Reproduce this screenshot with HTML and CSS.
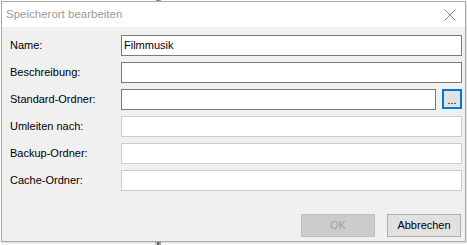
FILE: index.html
```html
<!DOCTYPE html>
<html lang="de">
<head>
<meta charset="utf-8">
<title>Speicherort bearbeiten</title>
<link rel="stylesheet" href="styles.css">
</head>
<body>
<div class="window">
  <div class="titlebar">
    <span class="title">Speicherort bearbeiten</span>
    <svg class="close" width="12" height="12" viewBox="0 0 12 12"><path d="M0.5 0.5 L11.5 11.5 M11.5 0.5 L0.5 11.5" stroke="#8c8c8c" stroke-width="1" fill="none"/></svg>
  </div>
  <div class="content">
    <div class="form">
      <label class="label">Name:</label>
      <div class="field"><div class="input active">Filmmusik</div></div>
      <label class="label">Beschreibung:</label>
      <div class="field"><div class="input active"></div></div>
      <label class="label">Standard-Ordner:</label>
      <div class="field"><div class="input active"></div><div class="browse">...</div></div>
      <label class="label">Umleiten nach:</label>
      <div class="field"><div class="input"></div></div>
      <label class="label">Backup-Ordner:</label>
      <div class="field"><div class="input"></div></div>
      <label class="label">Cache-Ordner:</label>
      <div class="field"><div class="input"></div></div>
    </div>
    <div class="buttons">
      <div class="btn disabled">OK</div>
      <div class="btn">Abbrechen</div>
    </div>
  </div>
</div>
</body>
</html>
```
FILE: styles.css
```css
html, body {
  margin: 0;
  padding: 0;
}
body {
  width: 467px;
  height: 245px;
  background:
    linear-gradient(to right, transparent 155px, #cfcfcf 155px, #cfcfcf 157px, #6e6e6e 157px, #6e6e6e 159px, #a8a8a8 159px, #a8a8a8 161px, transparent 161px),
    #ffffff;
  font-family: "Liberation Sans", Arial, sans-serif;
  font-size: 11px;
  color: #000;
  padding-top: 1px;
  padding-left: 1px;
  box-sizing: border-box;
  overflow: hidden;
}
.window {
  width: 465px;
  height: 241px;
  box-sizing: border-box;
  border: 1px solid #a9a9a9;
  background: #f0f0f0;
  display: flex;
  flex-direction: column;
  box-shadow: 1px 1px 2px rgba(0,0,0,0.18);
}
.titlebar {
  height: 25px;
  background: #ffffff;
  display: flex;
  align-items: center;
  justify-content: space-between;
  padding: 0 8px 0 4px;
  flex: none;
}
.title {
  color: #9a9a9a;
  font-size: 11.5px;
  padding-bottom: 1px;
}
.close {
  display: block;
  margin-right: 1px;
}
.content {
  flex: 1;
  display: flex;
  flex-direction: column;
  padding: 8px 3px 4px 8px;
}
.form {
  display: grid;
  grid-template-columns: 111px 1fr;
  row-gap: 6px;
  align-items: center;
}
.label {
  line-height: 21px;
  height: 21px;
}
.field {
  display: flex;
  gap: 6px;
  align-items: flex-start;
}
.input {
  flex: 1;
  height: 21px;
  box-sizing: border-box;
  border: 1px solid #cccccc;
  background: #ffffff;
  padding: 0 2px;
  line-height: 19px;
  font-size: 11px;
  color: #000;
}
.input.active {
  border-color: #7a7a7a;
}
.browse {
  width: 20px;
  height: 20px;
  box-sizing: border-box;
  border: 2px solid #0078d7;
  background: #e1e1e1;
  text-align: center;
  line-height: 18px;
  font-size: 11px;
  flex: none;
}
.buttons {
  margin-top: auto;
  display: flex;
  justify-content: flex-end;
  gap: 12px;
  padding-right: 1px;
}
.btn {
  width: 74px;
  height: 23px;
  box-sizing: border-box;
  border: 1px solid #adadad;
  background: #e1e1e1;
  text-align: center;
  line-height: 21px;
  font-size: 11px;
}
.btn.disabled {
  background: #cccccc;
  border-color: #bfbfbf;
  color: #a0a0a0;
}
```
